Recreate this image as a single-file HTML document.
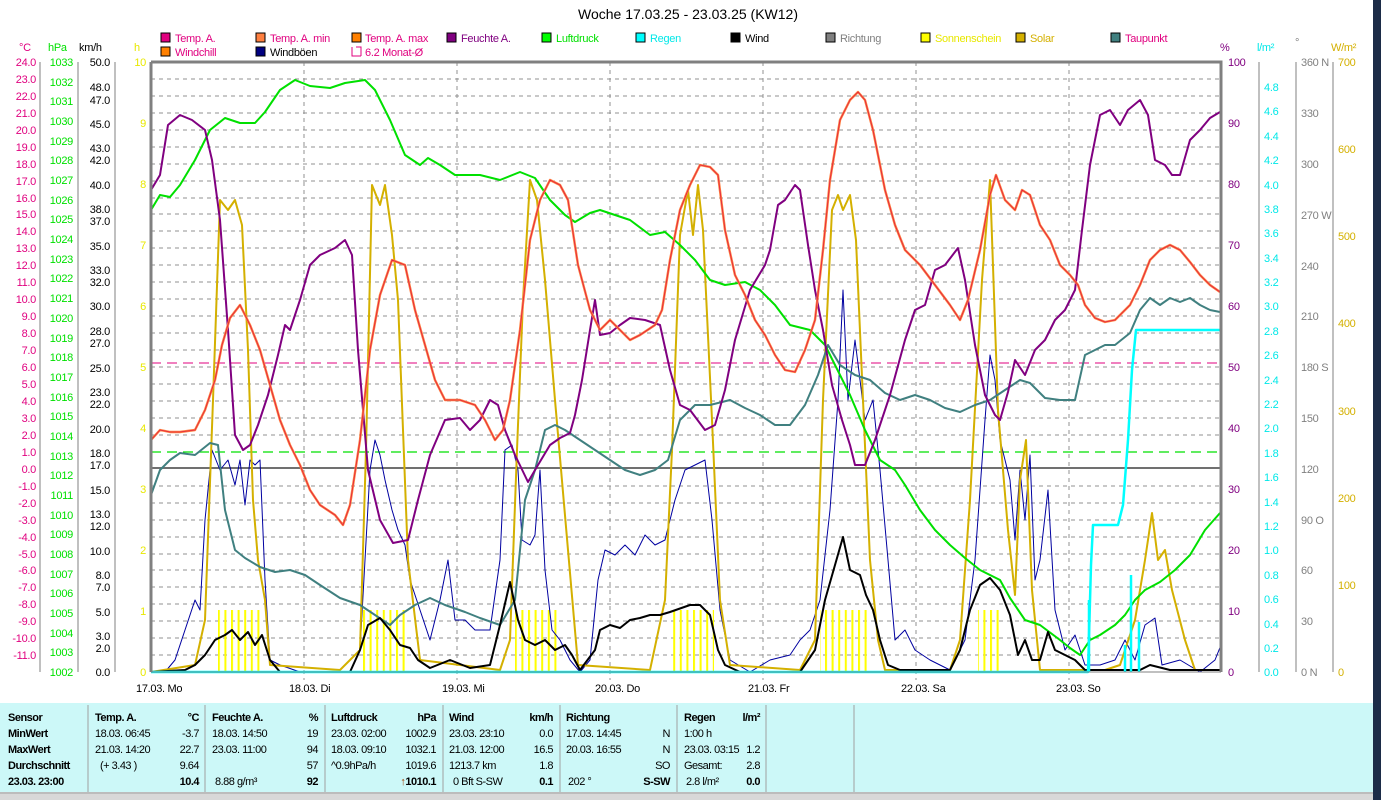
<!DOCTYPE html>
<html><head><meta charset="utf-8"><style>
html,body{margin:0;padding:0;background:#fff;width:1381px;height:800px;overflow:hidden}
svg{display:block}
text{font-family:"Liberation Sans",sans-serif;font-size:11px;letter-spacing:-0.3px}
.tb text{font-size:11px;letter-spacing:-0.5px}
</style></head><body>
<svg width="1381" height="800" xmlns="http://www.w3.org/2000/svg">
<defs>
<pattern id="bars" width="6.6" height="10" patternUnits="userSpaceOnUse"><rect x="0" y="0" width="2" height="10" fill="#ffff00"/></pattern>
</defs>
<rect width="1381" height="800" fill="#fff"/>
<rect x="1373" y="0" width="8" height="800" fill="#1c2c48"/>
<text x="688" y="19" text-anchor="middle" style="font-size:14px;letter-spacing:0">Woche 17.03.25 - 23.03.25 (KW12)</text>

<g stroke="#000" stroke-width="1">
<rect x="161" y="33" width="9" height="9" fill="#e0007f"/><rect x="256" y="33" width="9" height="9" fill="#ff8040"/><rect x="352" y="33" width="9" height="9" fill="#ff8000"/>
<rect x="447" y="33" width="9" height="9" fill="#800080"/><rect x="542" y="33" width="9" height="9" fill="#00ff00"/><rect x="636" y="33" width="9" height="9" fill="#00ffff"/>
<rect x="731" y="33" width="9" height="9" fill="#000"/><rect x="826" y="33" width="9" height="9" fill="#808080"/><rect x="921" y="33" width="9" height="9" fill="#ffff00"/>
<rect x="1016" y="33" width="9" height="9" fill="#d4b000"/><rect x="1111" y="33" width="9" height="9" fill="#408080"/>
<rect x="161" y="47" width="9" height="9" fill="#ff8000"/><rect x="256" y="47" width="9" height="9" fill="#000080"/>
</g>
<path d="M352 47 v9 h9 M356 47 h5 v9" fill="none" stroke="#e0007f"/>
<g>
<text x="175" y="42" fill="#e0007f">Temp. A.</text><text x="270" y="42" fill="#e0007f">Temp. A. min</text><text x="365" y="42" fill="#e0007f">Temp. A. max</text>
<text x="461" y="42" fill="#800080">Feuchte A.</text><text x="556" y="42" fill="#00e000">Luftdruck</text><text x="650" y="42" fill="#00e8e8">Regen</text>
<text x="745" y="42" fill="#000">Wind</text><text x="840" y="42" fill="#808080">Richtung</text><text x="935" y="42" fill="#e8e800">Sonnenschein</text>
<text x="1030" y="42" fill="#d4b000">Solar</text><text x="1125" y="42" fill="#e0007f">Taupunkt</text>
<text x="175" y="56" fill="#e0007f">Windchill</text><text x="270" y="56" fill="#000">Windböen</text><text x="365" y="56" fill="#e0007f">6.2 Monat-Ø</text>
</g>

<text x="19" y="51" fill="#e0007f">°C</text><text x="48" y="51" fill="#00e000">hPa</text><text x="79" y="51" fill="#000">km/h</text><text x="134" y="51" fill="#e8e800">h</text>
<text x="1220" y="51" fill="#800080">%</text><text x="1257" y="51" fill="#00e8e8">l/m²</text><text x="1295" y="46" fill="#808080">°</text><text x="1331" y="51" fill="#d4b000">W/m²</text>

<g stroke="#909090" stroke-dasharray="4,4" stroke-width="1">
<path d="M151 79H1221M151 96H1221M151 113H1221M151 130H1221M151 147H1221M151 164H1221M151 181H1221M151 198H1221M151 214H1221M151 231H1221M151 248H1221M151 265H1221M151 282H1221M151 299H1221M151 316H1221M151 333H1221M151 350H1221M151 367H1221M151 384H1221M151 401H1221M151 418H1221M151 435H1221M151 486H1221M151 503H1221M151 520H1221M151 537H1221M151 554H1221M151 570H1221M151 587H1221M151 604H1221M151 621H1221M151 638H1221M151 655H1221"/>
<path d="M304 62V680M457 62V680M610 62V680M763 62V680M916 62V680M1069 62V680"/>
</g>
<path d="M151 468H1221" stroke="#707070" stroke-width="2"/>
<path d="M151 452H1221" stroke="#00e000" stroke-width="1.3" stroke-dasharray="10,6"/>
<path d="M151 363H1221" stroke="#e0007f" stroke-width="1" stroke-dasharray="10,6"/>

<rect x="218" y="610" width="46" height="62" fill="url(#bars)"/>
<rect x="360" y="610" width="46" height="62" fill="url(#bars)"/>
<rect x="515" y="610" width="42" height="62" fill="url(#bars)"/>
<rect x="672" y="610" width="42" height="62" fill="url(#bars)"/>
<rect x="820" y="610" width="48" height="62" fill="url(#bars)"/>
<rect x="978" y="610" width="22" height="62" fill="url(#bars)"/>

<g fill="none" stroke-linejoin="round">
<polyline stroke="#0000a0" stroke-width="1" points="151,672 165,672 175,660 185,630 195,600 200,610 205,520 212,450 220,470 228,460 235,485 240,460 245,505 250,460 255,465 260,460 265,580 270,660 280,665 300,672 350,672 360,650 365,560 370,470 375,440 380,455 385,480 392,510 398,530 405,545 410,580 420,610 430,640 440,600 448,560 455,620 465,620 475,630 490,630 500,560 505,450 512,445 518,470 522,540 530,545 535,535 540,470 545,570 552,630 560,640 570,660 580,672 590,660 598,580 605,550 615,555 625,545 635,555 645,535 655,545 665,540 675,500 685,470 695,465 705,460 712,520 720,610 730,660 750,672 770,660 790,655 800,640 810,630 820,600 830,510 838,400 843,290 848,400 855,340 865,420 873,400 880,470 888,560 895,640 905,630 915,650 930,660 950,670 965,640 975,560 985,420 990,355 995,380 1000,440 1010,480 1015,540 1020,470 1025,520 1030,455 1035,580 1040,560 1048,490 1055,610 1065,650 1075,635 1085,665 1100,665 1115,660 1125,640 1135,660 1145,625 1155,618 1162,665 1180,660 1200,672 1215,660 1221,645"/>
<polyline stroke="#d4b000" stroke-width="2" points="151,672 195,665 205,620 213,400 220,200 228,210 235,200 242,225 248,350 253,500 258,560 265,600 270,665 340,670 360,650 366,450 372,185 380,205 385,185 392,235 398,300 403,430 408,560 420,660 500,670 510,640 517,450 523,300 530,180 537,200 545,280 555,400 568,550 578,665 650,670 665,600 672,450 680,235 688,190 693,235 698,185 703,230 712,420 720,600 730,665 800,670 815,640 823,400 832,210 838,195 843,210 850,195 856,240 863,400 870,560 878,640 885,670 950,670 960,640 970,500 982,280 990,180 998,410 1008,530 1015,595 1020,480 1026,440 1032,590 1040,670 1105,670 1120,665 1135,620 1145,560 1152,513 1158,560 1165,550 1172,590 1185,640 1195,670 1221,670"/>
<polyline stroke="#408080" stroke-width="2" points="151,495 160,470 170,460 180,453 195,455 210,443 218,445 225,510 235,550 245,558 260,567 275,572 290,570 305,575 320,585 340,598 360,605 375,615 390,625 400,615 415,605 430,598 445,605 465,612 480,618 500,625 515,600 525,500 535,470 545,430 555,425 565,430 580,440 595,450 610,460 625,470 640,475 655,470 668,460 680,420 695,405 710,405 730,400 745,408 760,415 775,425 790,425 805,405 818,375 828,345 840,365 855,375 870,380 885,393 900,400 915,395 930,400 945,408 960,412 975,405 990,400 1005,390 1020,380 1030,383 1045,398 1060,400 1075,400 1085,355 1095,350 1105,345 1115,345 1130,333 1140,310 1150,298 1160,305 1170,298 1180,302 1190,298 1200,305 1210,310 1220,312"/>
<polyline stroke="#00e000" stroke-width="2" points="151,210 160,195 170,197 180,185 195,160 210,130 225,118 240,123 255,123 265,112 280,90 295,80 310,86 330,88 345,83 365,80 375,90 390,120 405,155 420,165 428,158 440,165 455,175 480,175 500,180 520,172 535,178 550,200 565,215 575,222 590,213 600,210 615,215 630,220 650,235 665,232 680,245 695,260 710,280 725,285 745,282 760,290 775,305 790,325 810,330 825,345 835,365 850,395 865,430 880,460 895,470 905,485 920,510 935,530 950,545 965,558 980,570 1000,580 1010,598 1025,620 1040,625 1060,640 1070,648 1080,655 1090,640 1100,635 1115,625 1125,615 1135,600 1145,590 1160,582 1175,570 1190,555 1205,530 1220,513"/>
<polyline stroke="#800080" stroke-width="2" points="151,190 160,175 168,125 180,115 192,120 205,130 212,160 220,220 228,330 235,435 243,450 250,445 258,425 268,395 278,355 285,325 290,330 300,300 310,265 320,255 335,248 345,240 352,255 358,350 368,470 380,520 393,543 408,540 418,500 430,455 445,420 460,418 470,430 480,420 490,400 498,405 505,430 515,455 528,482 538,465 550,445 560,438 570,433 575,415 582,380 590,330 595,300 600,335 610,333 620,325 630,318 645,320 660,325 670,370 680,405 690,410 705,430 715,425 725,390 735,340 750,290 765,265 770,250 778,205 785,200 795,185 800,190 808,245 815,290 823,330 832,385 842,420 850,445 855,465 865,465 875,440 890,395 905,340 915,310 925,305 935,270 945,265 958,248 965,280 975,345 985,395 995,415 1000,420 1008,392 1015,360 1025,375 1035,350 1045,340 1055,320 1065,310 1075,290 1082,230 1090,165 1100,115 1110,110 1120,125 1128,110 1140,100 1148,115 1155,160 1165,165 1172,175 1180,175 1190,140 1200,130 1210,118 1220,112"/>
<polyline stroke="#ff8040" stroke-width="2.4" points="151,440 160,430 170,432 180,432 195,430 205,410 215,380 222,345 230,318 240,305 250,325 260,350 270,385 280,420 290,445 300,465 310,490 320,505 335,515 343,525 350,505 360,440 370,350 380,295 392,260 405,265 415,310 425,345 435,380 445,400 460,400 475,405 485,420 495,440 503,430 510,400 520,330 530,240 540,200 550,180 560,185 568,200 578,265 590,310 600,330 610,320 620,330 630,340 640,335 655,325 662,310 670,260 680,210 690,185 700,165 710,167 718,175 725,230 735,275 745,295 755,320 765,335 775,355 785,370 795,372 805,350 815,320 823,250 830,180 840,120 850,100 858,92 865,100 873,130 885,190 895,225 905,250 920,265 935,285 950,305 960,320 968,300 980,250 990,195 996,175 1005,200 1015,210 1022,190 1030,195 1040,225 1050,240 1060,265 1070,275 1078,285 1085,305 1095,318 1105,322 1115,320 1130,305 1140,285 1150,260 1160,250 1170,245 1180,250 1190,262 1200,275 1210,285 1220,292"/>
<polyline stroke="#e02040" stroke-width="0.8" points="151,440 160,430 170,432 180,432 195,430 205,410 215,380 222,345 230,318 240,305 250,325 260,350 270,385 280,420 290,445 300,465 310,490 320,505 335,515 343,525 350,505 360,440 370,350 380,295 392,260 405,265 415,310 425,345 435,380 445,400 460,400 475,405 485,420 495,440 503,430 510,400 520,330 530,240 540,200 550,180 560,185 568,200 578,265 590,310 600,330 610,320 620,330 630,340 640,335 655,325 662,310 670,260 680,210 690,185 700,165 710,167 718,175 725,230 735,275 745,295 755,320 765,335 775,355 785,370 795,372 805,350 815,320 823,250 830,180 840,120 850,100 858,92 865,100 873,130 885,190 895,225 905,250 920,265 935,285 950,305 960,320 968,300 980,250 990,195 996,175 1005,200 1015,210 1022,190 1030,195 1040,225 1050,240 1060,265 1070,275 1078,285 1085,305 1095,318 1105,322 1115,320 1130,305 1140,285 1150,260 1160,250 1170,245 1180,250 1190,262 1200,275 1210,285 1220,292"/>
<polyline stroke="#000" stroke-width="2" points="151,672 185,670 195,665 205,655 215,640 225,635 232,630 240,640 248,632 255,645 262,635 270,660 280,672 350,672 360,650 368,625 380,618 390,630 400,645 410,648 418,660 430,668 450,660 470,668 490,665 500,625 510,582 518,620 525,640 535,645 545,640 555,650 565,645 572,655 580,670 595,650 600,630 610,625 620,628 630,620 640,618 650,615 660,615 670,612 690,605 700,605 710,615 718,650 725,665 740,672 800,672 815,650 825,600 835,565 843,537 850,570 860,575 866,595 873,610 880,640 888,665 900,670 950,670 960,650 970,610 980,585 990,578 1000,590 1010,615 1018,655 1025,640 1032,660 1040,660 1048,632 1055,650 1065,655 1075,660 1085,670 1140,670 1150,665 1170,670 1221,670"/>
<polyline stroke="#00ffff" stroke-width="2.5" points="151,672 1085,672 1088,672 1091,565 1093,525 1118,525 1123,505 1128,440 1132,370 1136,330 1221,330"/>
<path d="M1089 672V600M1125 672V645M1131 672V575M1139 672V622" stroke="#00ffff" stroke-width="2.5"/>
</g>

<path d="M151 62H1221V672M151 62V672" stroke="#808080" stroke-width="3" fill="none"/>
<path d="M151 672H1221" stroke="#808080" stroke-width="1"/>

<g stroke="#808080" fill="none">
<path d="M40 62V672M78 62V672M115 62V672"/>
</g>
<g fill="#e0007f" text-anchor="end">
<text x="36" y="66">24.0</text><text x="36" y="83">23.0</text><text x="36" y="100">22.0</text><text x="36" y="117">21.0</text><text x="36" y="134">20.0</text><text x="36" y="151">19.0</text><text x="36" y="168">18.0</text><text x="36" y="185">17.0</text><text x="36" y="202">16.0</text><text x="36" y="218">15.0</text><text x="36" y="235">14.0</text><text x="36" y="252">13.0</text><text x="36" y="269">12.0</text><text x="36" y="286">11.0</text><text x="36" y="303">10.0</text><text x="36" y="320">9.0</text><text x="36" y="337">8.0</text><text x="36" y="354">7.0</text><text x="36" y="371">6.0</text><text x="36" y="388">5.0</text><text x="36" y="405">4.0</text><text x="36" y="422">3.0</text><text x="36" y="439">2.0</text><text x="36" y="456">1.0</text><text x="36" y="473">0.0</text><text x="36" y="490">-1.0</text><text x="36" y="507">-2.0</text><text x="36" y="524">-3.0</text><text x="36" y="541">-4.0</text><text x="36" y="558">-5.0</text><text x="36" y="574">-6.0</text><text x="36" y="591">-7.0</text><text x="36" y="608">-8.0</text><text x="36" y="625">-9.0</text><text x="36" y="642">-10.0</text><text x="36" y="659">-11.0</text>
</g>
<g fill="#00e000" text-anchor="end">
<text x="73" y="66">1033</text><text x="73" y="86">1032</text><text x="73" y="105">1031</text><text x="73" y="125">1030</text><text x="73" y="145">1029</text><text x="73" y="164">1028</text><text x="73" y="184">1027</text><text x="73" y="204">1026</text><text x="73" y="223">1025</text><text x="73" y="243">1024</text><text x="73" y="263">1023</text><text x="73" y="282">1022</text><text x="73" y="302">1021</text><text x="73" y="322">1020</text><text x="73" y="342">1019</text><text x="73" y="361">1018</text><text x="73" y="381">1017</text><text x="73" y="401">1016</text><text x="73" y="420">1015</text><text x="73" y="440">1014</text><text x="73" y="460">1013</text><text x="73" y="479">1012</text><text x="73" y="499">1011</text><text x="73" y="519">1010</text><text x="73" y="538">1009</text><text x="73" y="558">1008</text><text x="73" y="578">1007</text><text x="73" y="597">1006</text><text x="73" y="617">1005</text><text x="73" y="637">1004</text><text x="73" y="656">1003</text><text x="73" y="676">1002</text>
</g>
<g fill="#000" text-anchor="end">
<text x="110" y="66">50.0</text><text x="110" y="91">48.0</text><text x="110" y="104">47.0</text><text x="110" y="128">45.0</text><text x="110" y="152">43.0</text><text x="110" y="164">42.0</text><text x="110" y="189">40.0</text><text x="110" y="213">38.0</text><text x="110" y="225">37.0</text><text x="110" y="250">35.0</text><text x="110" y="274">33.0</text><text x="110" y="286">32.0</text><text x="110" y="310">30.0</text><text x="110" y="335">28.0</text><text x="110" y="347">27.0</text><text x="110" y="372">25.0</text><text x="110" y="396">23.0</text><text x="110" y="408">22.0</text><text x="110" y="433">20.0</text><text x="110" y="457">18.0</text><text x="110" y="469">17.0</text><text x="110" y="494">15.0</text><text x="110" y="518">13.0</text><text x="110" y="530">12.0</text><text x="110" y="555">10.0</text><text x="110" y="579">8.0</text><text x="110" y="591">7.0</text><text x="110" y="616">5.0</text><text x="110" y="640">3.0</text><text x="110" y="652">2.0</text><text x="110" y="676">0.0</text>
</g>
<g fill="#e8e800" text-anchor="end">
<text x="146" y="66">10</text><text x="146" y="127">9</text><text x="146" y="188">8</text><text x="146" y="249">7</text><text x="146" y="310">6</text><text x="146" y="371">5</text><text x="146" y="432">4</text><text x="146" y="493">3</text><text x="146" y="554">2</text><text x="146" y="615">1</text><text x="146" y="676">0</text>
</g>

<g stroke="#808080" fill="none">
<path d="M1259 62V672M1296 62V672M1333 62V672"/>
</g>
<g fill="#800080">
<text x="1228" y="66">100</text><text x="1228" y="127">90</text><text x="1228" y="188">80</text><text x="1228" y="249">70</text><text x="1228" y="310">60</text><text x="1228" y="371">50</text><text x="1228" y="432">40</text><text x="1228" y="493">30</text><text x="1228" y="554">20</text><text x="1228" y="615">10</text><text x="1228" y="676">0</text>
</g>
<g fill="#00e8e8">
<text x="1264" y="91">4.8</text><text x="1264" y="115">4.6</text><text x="1264" y="140">4.4</text><text x="1264" y="164">4.2</text><text x="1264" y="189">4.0</text><text x="1264" y="213">3.8</text><text x="1264" y="237">3.6</text><text x="1264" y="262">3.4</text><text x="1264" y="286">3.2</text><text x="1264" y="310">3.0</text><text x="1264" y="335">2.8</text><text x="1264" y="359">2.6</text><text x="1264" y="384">2.4</text><text x="1264" y="408">2.2</text><text x="1264" y="432">2.0</text><text x="1264" y="457">1.8</text><text x="1264" y="481">1.6</text><text x="1264" y="506">1.4</text><text x="1264" y="530">1.2</text><text x="1264" y="554">1.0</text><text x="1264" y="579">0.8</text><text x="1264" y="603">0.6</text><text x="1264" y="628">0.4</text><text x="1264" y="652">0.2</text><text x="1264" y="676">0.0</text>
</g>
<g fill="#808080">
<text x="1301" y="66">360 N</text><text x="1301" y="117">330</text><text x="1301" y="168">300</text><text x="1301" y="219">270 W</text><text x="1301" y="270">240</text><text x="1301" y="320">210</text><text x="1301" y="371">180 S</text><text x="1301" y="422">150</text><text x="1301" y="473">120</text><text x="1301" y="524">90  O</text><text x="1301" y="574">60</text><text x="1301" y="625">30</text><text x="1301" y="676">0    N</text>
</g>
<g fill="#d4b000">
<text x="1338" y="66">700</text><text x="1338" y="153">600</text><text x="1338" y="240">500</text><text x="1338" y="327">400</text><text x="1338" y="415">300</text><text x="1338" y="502">200</text><text x="1338" y="589">100</text><text x="1338" y="676">0</text>
</g>

<g fill="#000" style="font-size:12px">
<text x="136" y="692">17.03.  Mo</text><text x="289" y="692">18.03.  Di</text><text x="442" y="692">19.03.  Mi</text><text x="595" y="692">20.03.  Do</text><text x="748" y="692">21.03.  Fr</text><text x="901" y="692">22.03.  Sa</text><text x="1056" y="692">23.03.  So</text>
</g>

<rect x="0" y="703" width="1373" height="90" fill="#ccf8f8"/>
<rect x="0" y="792" width="1373" height="8" fill="#d8d8d8"/>
<path d="M0 793H1373" stroke="#a0a0a0"/>
<g stroke="#a0a0a0"><path d="M88 705V792M205 705V792M325 705V792M443 705V792M560 705V792M677 705V792M766 705V792M854 705V792"/></g>
<g class="tb" fill="#000">
<g font-weight="bold"><text x="8" y="721">Sensor</text><text x="8" y="737">MinWert</text><text x="8" y="753">MaxWert</text><text x="8" y="769">Durchschnitt</text><text x="8" y="785">23.03. 23:00</text></g>
<text x="95" y="721" font-weight="bold">Temp. A.</text><text x="199" y="721" font-weight="bold" text-anchor="end">°C</text>
<text x="95" y="737">18.03.  06:45</text><text x="199" y="737" text-anchor="end">-3.7</text>
<text x="95" y="753">21.03.  14:20</text><text x="199" y="753" text-anchor="end">22.7</text>
<text x="100" y="769">(+ 3.43 )</text><text x="199" y="769" text-anchor="end">9.64</text>
<text x="199" y="785" text-anchor="end" font-weight="bold">10.4</text>
<text x="212" y="721" font-weight="bold">Feuchte A.</text><text x="318" y="721" font-weight="bold" text-anchor="end">%</text>
<text x="212" y="737">18.03.  14:50</text><text x="318" y="737" text-anchor="end">19</text>
<text x="212" y="753">23.03.  11:00</text><text x="318" y="753" text-anchor="end">94</text>
<text x="318" y="769" text-anchor="end">57</text>
<text x="215" y="785">8.88 g/m³</text><text x="318" y="785" text-anchor="end" font-weight="bold">92</text>
<text x="331" y="721" font-weight="bold">Luftdruck</text><text x="436" y="721" font-weight="bold" text-anchor="end">hPa</text>
<text x="331" y="737">23.03.  02:00</text><text x="436" y="737" text-anchor="end">1002.9</text>
<text x="331" y="753">18.03.  09:10</text><text x="436" y="753" text-anchor="end">1032.1</text>
<text x="331" y="769">^0.9hPa/h</text><text x="436" y="769" text-anchor="end">1019.6</text>
<text x="436" y="785" text-anchor="end" font-weight="bold"><tspan fill="#a04000">↑</tspan>1010.1</text>
<text x="449" y="721" font-weight="bold">Wind</text><text x="553" y="721" font-weight="bold" text-anchor="end">km/h</text>
<text x="449" y="737">23.03.  23:10</text><text x="553" y="737" text-anchor="end">0.0</text>
<text x="449" y="753">21.03.  12:00</text><text x="553" y="753" text-anchor="end">16.5</text>
<text x="449" y="769">1213.7 km</text><text x="553" y="769" text-anchor="end">1.8</text>
<text x="453" y="785">0 Bft S-SW</text><text x="553" y="785" text-anchor="end" font-weight="bold">0.1</text>
<text x="566" y="721" font-weight="bold">Richtung</text>
<text x="566" y="737">17.03.  14:45</text><text x="670" y="737" text-anchor="end">N</text>
<text x="566" y="753">20.03.  16:55</text><text x="670" y="753" text-anchor="end">N</text>
<text x="670" y="769" text-anchor="end">SO</text>
<text x="568" y="785">202 °</text><text x="670" y="785" text-anchor="end" font-weight="bold">S-SW</text>
<text x="684" y="721" font-weight="bold">Regen</text><text x="760" y="721" font-weight="bold" text-anchor="end">l/m²</text>
<text x="684" y="737">1:00 h</text>
<text x="684" y="753">23.03. 03:15</text><text x="760" y="753" text-anchor="end">1.2</text>
<text x="684" y="769">Gesamt:</text><text x="760" y="769" text-anchor="end">2.8</text>
<text x="686" y="785">2.8 l/m²</text><text x="760" y="785" text-anchor="end" font-weight="bold">0.0</text>
</g>
</svg>
</body></html>
